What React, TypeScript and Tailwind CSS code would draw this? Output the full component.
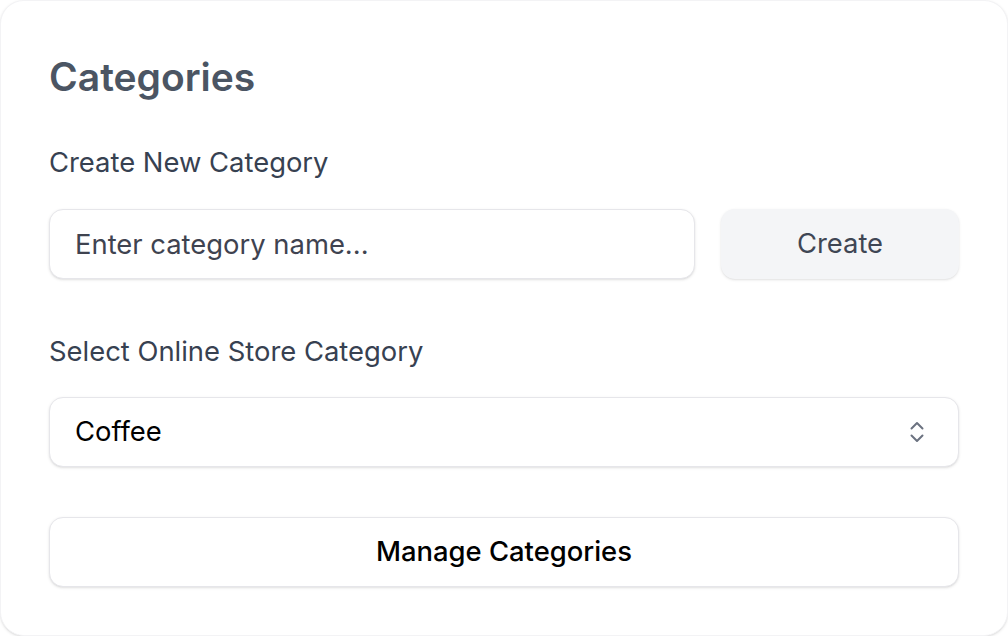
import React from "react";

export default function App() {
  return (
    <div
      className="w-[1008px] h-[636px] bg-white"
      style={{ fontFamily: "Inter, 'Noto Sans', sans-serif" }}
    >
      <div className="h-full w-full rounded-[24px] border border-[#f3f3f5] bg-white shadow-sm px-12 pt-[48px]">
        <h2 className="text-[39px] leading-[56px] font-semibold text-[#4b5563]">
          Categories
        </h2>
        <label className="mt-[37px] block text-[27.4px] leading-[40px] text-[#374151]">
          Create New Category
        </label>
        <div className="mt-[27px] flex gap-[26px]">
          <input
            className="h-[70px] flex-1 min-w-0 rounded-[14px] border border-[#e6e6ea] bg-white px-[25px] text-[27.4px] text-[#374151] shadow-sm outline-none placeholder:text-[#3f4350]"
            placeholder="Enter category name..."
          />
          <button className="h-[70px] w-[238px] rounded-[14px] bg-[#f4f5f7] text-[27.4px] text-[#3f4654] shadow-sm">
            Create
          </button>
        </div>
        <label className="mt-[52px] block text-[27.4px] leading-[40px] text-[#374151]">
          Select Online Store Category
        </label>
        <div className="mt-[26px] flex h-[70px] items-center justify-between rounded-[14px] border border-[#e6e6ea] bg-white pl-[25px] pr-[34px] shadow-sm">
          <span className="text-[27.4px] text-black">Coffee</span>
          <svg width="14" height="22" viewBox="0 0 14 22" fill="none">
            <path
              d="M1.5 7.5 L7 2 L12.5 7.5"
              stroke="#6b7280"
              strokeWidth="2"
              strokeLinecap="round"
              strokeLinejoin="round"
            />
            <path
              d="M1.5 14.5 L7 20 L12.5 14.5"
              stroke="#6b7280"
              strokeWidth="2"
              strokeLinecap="round"
              strokeLinejoin="round"
            />
          </svg>
        </div>
        <button className="mt-[50px] flex h-[70px] w-full items-center justify-center rounded-[14px] border border-[#e6e6ea] bg-white text-[27.4px] font-medium text-black shadow-sm">
          Manage Categories
        </button>
      </div>
    </div>
  );
}
